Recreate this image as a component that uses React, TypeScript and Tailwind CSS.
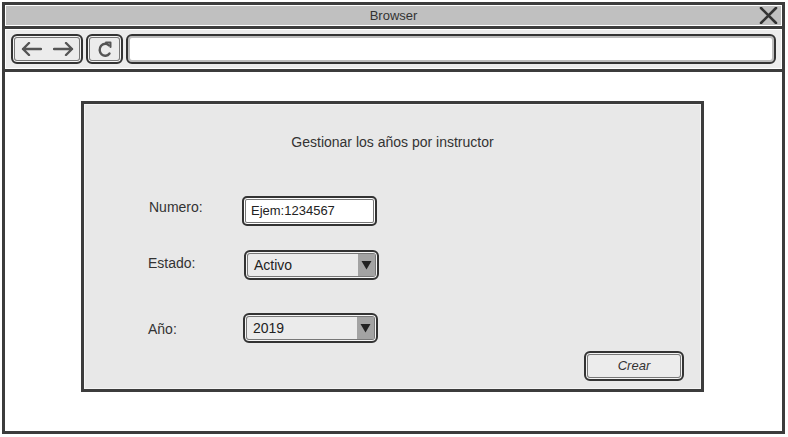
import React from "react";

const font = { fontFamily: '"Liberation Sans", Arial, sans-serif' };

const SketchButton = ({ className = "", children }: { className?: string; children?: React.ReactNode }) => (
    <div
        className={`flex items-center justify-center rounded-[6px] border-2 border-[#333] shadow-[inset_0_0_0_1px_#f4f4f4,inset_0_0_0_2px_#777] ${className}`}
    >
        {children}
    </div>
);

const Select = ({ value, className = "" }: { value: string; className?: string }) => (
    <div
        className={`flex h-[30px] w-[135px] items-stretch overflow-hidden rounded-[6px] border-2 border-[#333] bg-[#ebebeb] shadow-[inset_0_0_0_1px_#f6f6f6,inset_0_0_0_2px_#777] ${className}`}
    >
        <span className="flex flex-1 items-center pl-[8px] text-[14px] text-[#222]">{value}</span>
        <span className="my-[2px] mr-[2px] flex w-[17px] items-center justify-center bg-[#a3a3a3]">
            <svg width="11" height="10" viewBox="0 0 11 10">
                <path d="M0.5 1 L10.5 1 L5.5 9.5 Z" fill="#222" />
            </svg>
        </span>
    </div>
);

export default function App() {
    return (
        <div className="bg-white pl-[2px] pt-[2px]" style={font}>
            <div className="flex h-[432px] w-[783px] flex-col border-[3px] border-[#3c3c3c] bg-white">
                {/* title bar */}
                <div className="bg-white p-px">
                    <div className="relative flex h-[19px] items-center justify-center bg-[#c0c0c0]">
                        <span className="text-[13px] text-[#333]">Browser</span>
                        <svg className="absolute right-[3px] top-[1px]" width="19" height="17" viewBox="0 0 19 17">
                            <path d="M2 1 L17 16 M17 1 L2 16" stroke="#333" strokeWidth="2.6" strokeLinecap="round" />
                        </svg>
                    </div>
                </div>
                <div className="h-[3px] bg-[#3c3c3c]" />

                {/* toolbar */}
                <div className="bg-white p-px">
                    <div className="flex h-[38px] items-center gap-[3px] bg-[#ececec] px-[5px]">
                        <SketchButton className="h-[30px] w-[72px] gap-[11px] bg-[#ececec]">
                            <svg width="21" height="14" viewBox="0 0 21 14">
                                <path d="M20 7 L2 7 M8 1 L2 7 L8 13" stroke="#555" strokeWidth="2.4" fill="none" strokeLinecap="round" strokeLinejoin="round" />
                            </svg>
                            <svg width="21" height="14" viewBox="0 0 21 14">
                                <path d="M1 7 L19 7 M13 1 L19 7 L13 13" stroke="#555" strokeWidth="2.4" fill="none" strokeLinecap="round" strokeLinejoin="round" />
                            </svg>
                        </SketchButton>
                        <SketchButton className="h-[30px] w-[37px] bg-[#ececec]">
                            <svg width="14" height="17" viewBox="0 0 14 17">
                                <path d="M11 4.5 A5.5 6 0 1 0 11.5 12.5" stroke="#555" strokeWidth="2.4" fill="none" strokeLinecap="round" />
                                <path d="M8 1.5 L12.5 1.5 L12.5 6" stroke="#555" strokeWidth="2" fill="none" strokeLinecap="round" strokeLinejoin="round" />
                            </svg>
                        </SketchButton>
                        <div className="h-[30px] flex-1 rounded-[6px] border-2 border-[#333] bg-white shadow-[inset_0_0_0_2px_#bdbdbd]" />
                    </div>
                </div>
                <div className="h-[3px] bg-[#3c3c3c]" />

                {/* content */}
                <div className="flex-1 bg-white pl-[76px] pt-[29px]">
                    <div className="flex h-[291px] w-[623px] flex-col border-[3px] border-[#3c3c3c] bg-[#e8e8e8] shadow-[inset_0_0_0_1px_#f4f4f4]">
                        <div className="mt-[28px] text-center text-[14px] leading-[20px] text-[#333]">
                            Gestionar los años por instructor
                        </div>

                        <div className="mt-[44px] flex items-start pl-[65px]">
                            <span className="mt-px w-[93px] text-[14px] leading-[20px] text-[#333]">Numero:</span>
                            <div className="flex h-[30px] w-[135px] items-center rounded-[5px] border-2 border-[#333] bg-white pl-[7px] text-[13px] text-[#222] shadow-[inset_0_0_0_1px_#fff,inset_0_0_0_2px_#777]">
                                Ejem:1234567
                            </div>
                        </div>

                        <div className="mt-[24px] flex items-start pl-[64px]">
                            <span className="mt-[3px] w-[96px] text-[14px] leading-[20px] text-[#333]">Estado:</span>
                            <Select value="Activo" />
                        </div>

                        <div className="mt-[33px] flex items-start pl-[64px]">
                            <span className="mt-[6px] w-[95px] text-[14px] leading-[20px] text-[#333]">Año:</span>
                            <Select value="2019" className="h-[29px]" />
                        </div>

                        <div className="mt-[8px] flex justify-end pr-[17px]">
                            <SketchButton className="h-[30px] w-[100px] bg-[#ececec]">
                                <span className="text-[13px] italic text-[#333]">Crear</span>
                            </SketchButton>
                        </div>
                    </div>
                </div>
            </div>
        </div>
    );
}
